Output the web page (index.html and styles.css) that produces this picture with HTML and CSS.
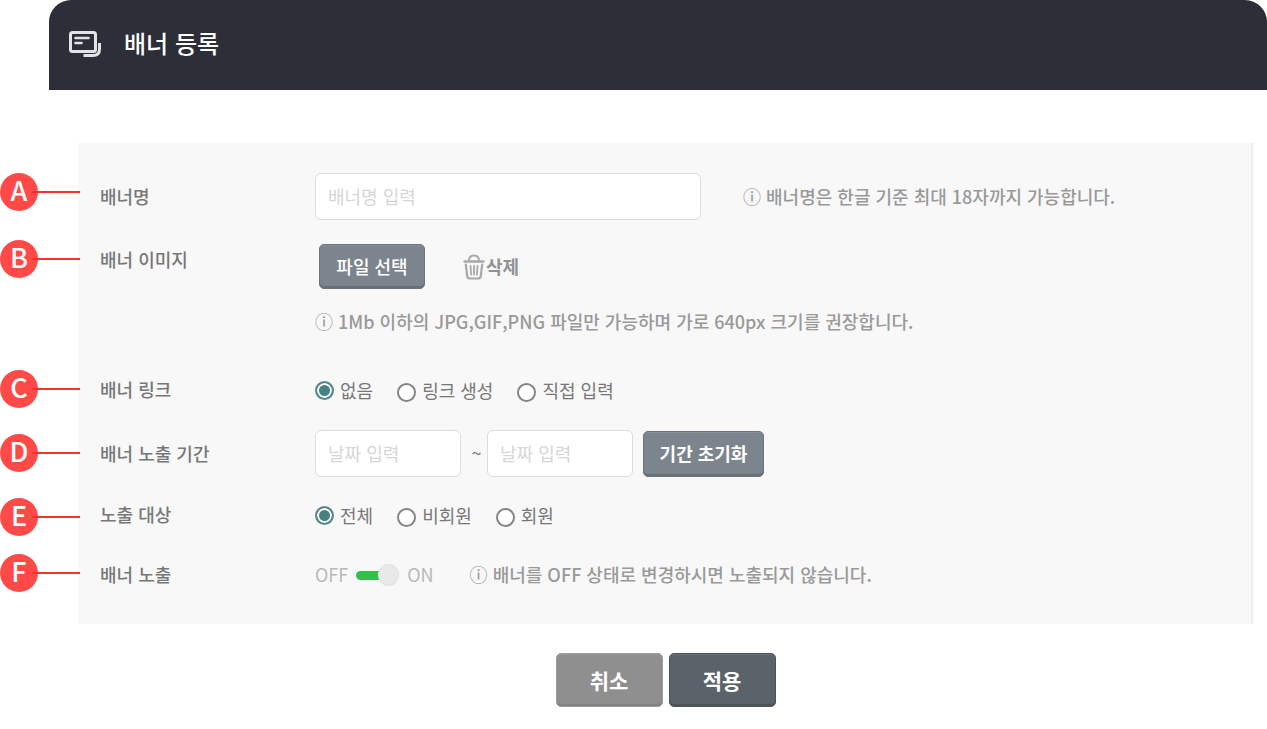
FILE: index.html
```html
<!DOCTYPE html>
<html lang="ko">
<head>
  <meta charset="UTF-8" />
  <meta name="viewport" content="width=device-width, initial-scale=1.0"/>
  <title>배너 등록</title>
  <link rel="stylesheet" href="styles.css">
</head>
<body>
  <header class="header">
    <svg class="header-icon" width="34" height="28" viewBox="0 0 34 28" fill="none" stroke="#e0e4e5">
      <rect x="2.500" y="2.500" width="25" height="19" rx="2" stroke-width="3"/>
      <path d="M7.500 8h13M7.500 13h6" stroke-width="2.600" stroke-linecap="round"/>
      <path d="M31.500 13v6q0 6.500-6.500 6.500H15.500" stroke-width="3"/>
    </svg>
    <h1 class="title">배너 등록</h1>
  </header>

  <main class="content">
    <div class="markers">
      <div class="marker"><span class="marker-dot">A</span></div>
      <div class="marker"><span class="marker-dot">B</span></div>
      <div class="marker"><span class="marker-dot">C</span></div>
      <div class="marker"><span class="marker-dot">D</span></div>
      <div class="marker"><span class="marker-dot">E</span></div>
      <div class="marker"><span class="marker-dot">F</span></div>
    </div>

    <form class="form">
      <div class="panel">
        <div class="row name-row">
          <label class="label" for="bannerName">배너명</label>
          <div class="field">
            <input type="text" id="bannerName" class="text-input name-input" placeholder="배너명 입력">
            <p class="hint">ⓘ 배너명은 한글 기준 최대 18자까지 가능합니다.</p>
          </div>
        </div>

        <div class="row image-row">
          <span class="label">배너 이미지</span>
          <div class="image-field">
            <div class="image-buttons">
              <button type="button" class="btn btn-file">파일 선택</button>
              <button type="button" class="btn-delete">
                <svg width="22" height="26" viewBox="0 0 22 26" fill="none" stroke="#a8a8a8" stroke-linecap="round" stroke-linejoin="round">
                  <path d="M6 6Q6.500 1.500 11 1.500T16 6" stroke-width="2"/>
                  <path d="M1.500 7.500h19" stroke-width="2.400"/>
                  <path d="M2.800 10.500l1.400 11.500q.3 2.500 2.800 2.500h8q2.500 0 2.800-2.500l1.400-11.500" stroke-width="2.200"/>
                  <path d="M7.500 12l.6 8.500M11 12v8.500M14.500 12l-.6 8.500" stroke-width="1.800"/>
                </svg>
                <span>삭제</span>
              </button>
            </div>
            <p class="hint">ⓘ 1Mb 이하의 JPG,GIF,PNG 파일만 가능하며 가로 640px 크기를 권장합니다.</p>
          </div>
        </div>

        <div class="row link-row">
          <span class="label">배너 링크</span>
          <div class="radios">
            <label class="radio-label"><input type="radio" class="radio" name="link" checked>없음</label>
            <label class="radio-label"><input type="radio" class="radio" name="link">링크 생성</label>
            <label class="radio-label"><input type="radio" class="radio" name="link">직접 입력</label>
          </div>
        </div>

        <div class="row period-row">
          <label class="label" for="startDate">배너 노출 기간</label>
          <div class="period">
            <input type="text" id="startDate" class="text-input date-input" placeholder="날짜 입력">
            <span class="tilde">~</span>
            <input type="text" class="text-input date-input" placeholder="날짜 입력" aria-label="종료 날짜">
            <button type="button" class="btn btn-reset">기간 초기화</button>
          </div>
        </div>

        <div class="row target-row">
          <span class="label">노출 대상</span>
          <div class="radios">
            <label class="radio-label"><input type="radio" class="radio" name="target" checked>전체</label>
            <label class="radio-label"><input type="radio" class="radio" name="target">비회원</label>
            <label class="radio-label"><input type="radio" class="radio" name="target">회원</label>
          </div>
        </div>

        <div class="row show-row">
          <label class="label" for="showBanner">배너 노출</label>
          <div class="show-field">
            <div class="switch">
              <span>OFF</span>
              <input type="checkbox" id="showBanner" class="toggle" checked>
              <span>ON</span>
            </div>
            <p class="hint">ⓘ 배너를 OFF 상태로 변경하시면 노출되지 않습니다.</p>
          </div>
        </div>
      </div>

      <div class="actions">
        <button type="button" class="btn btn-cancel">취소</button>
        <button type="submit" class="btn btn-apply">적용</button>
      </div>
    </form>
  </main>
</body>
</html>
```
FILE: styles.css
```css
* {
  box-sizing: border-box;
}
body {
  margin: 0;
  background-color: #fff;
  font-family: "Noto Sans CJK KR", sans-serif;
  font-size: 18px;
  line-height: 24px;
  color: #777;
}
button,
input {
  font-family: inherit;
  font-size: 18px;
}

/* header */
.header {
  display: flex;
  align-items: center;
  gap: 22px;
  height: 90px;
  margin-left: 49px;
  padding: 0 19px 3px;
  border-radius: 22px 22px 0 0;
  background-color: #2d2f38;
}
.title {
  margin: 0;
  padding-bottom: 2px;
  font-size: 24px;
  font-weight: 500;
  color: #fff;
}

/* markers beside the form */
.content {
  display: grid;
  grid-template-columns: 78px 1fr;
  padding: 53px 14px 22px 0;
}
.markers {
  display: grid;
  grid-template-rows: 67px 130px 64px 64px 56px 38px;
  align-content: start;
  padding-top: 30px;
  z-index: 1;
}
.marker {
  display: flex;
  align-items: center;
  width: 80px;
  height: 38px;
}
.marker::after {
  content: "";
  flex: 1;
  height: 2px;
  margin-left: -6px;
  background-color: #ff302b;
}
.marker-dot {
  width: 38px;
  height: 38px;
  border-radius: 50%;
  background-color: #ff4a47;
  color: #fff;
  font-size: 27px;
  font-weight: 500;
  line-height: 34px;
  text-align: center;
}

/* form */
.panel {
  padding: 30px 22px 36px;
  border-right: 2px solid #eee;
  background-color: #f8f8f8;
}
.row {
  display: grid;
  grid-template-columns: 215px 1fr;
  align-items: center;
}
.image-row {
  align-items: start;
  margin-top: 24px;
}
.link-row {
  margin-top: 42px;
}
.period-row {
  margin-top: 27px;
}
.target-row {
  margin-top: 25px;
}
.show-row {
  margin-top: 34px;
}
.label {
  padding-bottom: 2px;
  font-size: 18px;
  font-weight: 500;
}
.image-row .label {
  padding-top: 3px;
}
.field {
  display: flex;
  align-items: center;
  gap: 42px;
}
.text-input {
  height: 47px;
  padding: 0 12px 2px;
  border: 1px solid #ddd;
  border-radius: 6px;
  background-color: #fff;
  color: #777;
}
.text-input::placeholder {
  color: #d6d6d6;
}
.name-input {
  width: 386px;
}
.date-input {
  width: 146px;
}
.hint {
  margin: 0;
  padding-bottom: 2px;
  font-weight: 500;
  color: #999;
}
.image-buttons {
  display: flex;
  align-items: center;
  gap: 38px;
  margin-bottom: 20px;
  padding-left: 4px;
}

/* buttons */
.btn {
  padding: 0 0 2px;
  border: 1px solid #6b747b;
  border-radius: 5px;
  background-color: #7c858d;
  box-shadow: inset 0 1px 0 #87919a, inset 0 -2px 0 #687077;
  color: #fff;
  font-weight: 500;
  cursor: pointer;
}
.btn-file {
  width: 106px;
  height: 45px;
}
.btn-reset {
  width: 121px;
  height: 46px;
  margin-left: 10px;
  font-weight: 700;
}
.btn-delete {
  display: flex;
  align-items: center;
  gap: 1px;
  padding: 0;
  border: none;
  background: none;
  color: #929292;
  font-weight: 700;
  cursor: pointer;
}
.btn-delete span {
  padding-bottom: 2px;
}
.actions {
  display: flex;
  justify-content: center;
  gap: 6px;
  margin-top: 29px;
}
.btn-cancel,
.btn-apply {
  width: 107px;
  height: 54px;
  padding-bottom: 0;
  font-size: 21px;
  font-weight: 700;
}
.btn-cancel {
  border-color: #9b9b9b;
  background-color: #8f8f8f;
  box-shadow: inset 0 1px 0 #989898, inset 0 -2px 0 #828282;
}
.btn-apply {
  border-color: #4b535a;
  background-color: #5a636a;
  box-shadow: inset 0 1px 0 #69727a, inset 0 -2px 0 #4c545b;
}

/* radios */
.radios {
  display: flex;
  gap: 24px;
}
.radio-label {
  display: flex;
  align-items: center;
  gap: 6px;
}
.radio {
  appearance: none;
  width: 19px;
  height: 19px;
  margin: 5px 0 0;
  border: 2px solid #858585;
  border-radius: 50%;
  background-color: #fff;
}
.radio:checked {
  margin-top: 0;
  border-color: #55898b;
  background-color: #458082;
  box-shadow: inset 0 0 0 2px #fff;
}

/* period */
.period {
  display: flex;
  align-items: center;
}
.tilde {
  width: 26px;
  padding: 0 0 4px 5px;
  text-align: center;
}

/* switch */
.show-field {
  display: flex;
  align-items: center;
  gap: 36px;
}
.switch {
  display: flex;
  align-items: center;
  gap: 8px;
  color: #b8b8b8;
}
.switch span {
  padding-bottom: 2px;
}
.toggle {
  appearance: none;
  display: flex;
  align-items: center;
  width: 43px;
  height: 20px;
  margin: 0;
}
.toggle::before {
  content: "";
  width: 33px;
  height: 9px;
  border-radius: 5px;
  background-color: #31c148;
}
.toggle::after {
  content: "";
  width: 20px;
  height: 20px;
  margin-left: -10px;
  border: 1px solid #e0e0e0;
  border-radius: 50%;
  background-color: #e9e9e9;
}
.toggle:not(:checked) {
  flex-direction: row-reverse;
}
.toggle:not(:checked)::before {
  margin-left: -10px;
  background-color: #ccc;
}
.toggle:not(:checked)::after {
  margin-left: 0;
  z-index: 1;
}
```
